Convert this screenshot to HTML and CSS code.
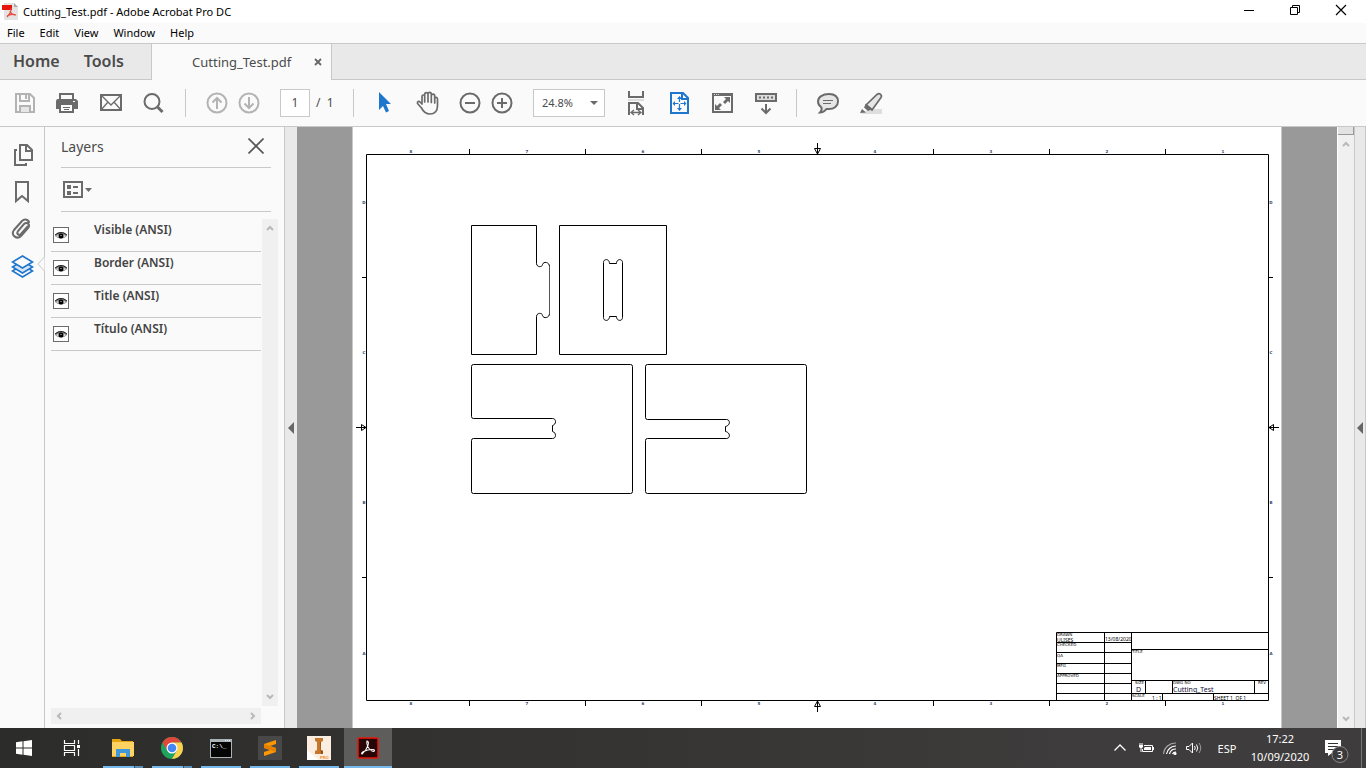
FILE: index.html
```html
<!DOCTYPE html>
<html lang="en">
<head>
<meta charset="utf-8">
<title>Cutting_Test.pdf - Adobe Acrobat Pro DC</title>
<link rel="stylesheet" href="styles.css">
</head>
<body>
<header class="titlebar">
  <svg class="app-icon" viewBox="0 0 16 17" width="16" height="17" aria-hidden="true">
    <path d="M2 0H12L16 4V17H2Z" fill="#e3e3e3"/><path d="M12 0L16 4H12Z" fill="#a9a9a9"/>
    <path d="M0 2H10V7H0Z" fill="#e5140c"/>
    <path d="M9 5C9.500 8 8 11 5 14M8 8C9 11 11 12 14 12M5 13C8 11 11 11 14 12" fill="none" stroke="#e9483e" stroke-width="1.200"/>
  </svg>
  <h1 class="window-title">Cutting_Test.pdf - Adobe Acrobat Pro DC</h1>
  <div class="window-controls">
    <button aria-label="Minimize"><svg viewBox="0 0 12 12" width="12" height="12"><path d="M1 6.500H11" stroke="#000"/></svg></button>
    <button aria-label="Restore"><svg viewBox="0 0 12 12" width="12" height="12"><path d="M1.500 3.500H8.500V10.500H1.500ZM3.500 3.500V1.500H10.500V8.500H8.500" fill="none" stroke="#000"/></svg></button>
    <button aria-label="Close"><svg viewBox="0 0 12 12" width="12" height="12"><path d="M1 1L11 11M11 1L1 11" stroke="#000" stroke-width="1.200"/></svg></button>
  </div>
</header>
<nav class="menubar" aria-label="Menu">
  <button>File</button><button>Edit</button><button>View</button><button>Window</button><button>Help</button>
</nav>
<div class="tabs">
  <div class="tabs-main"><button>Home</button><button>Tools</button></div>
  <div class="tab-doc"><span>Cutting_Test.pdf</span>
    <button aria-label="Close tab"><svg viewBox="0 0 8 8" width="8" height="8"><path d="M1 1L7 7M7 1L1 7" stroke="#666" stroke-width="1.800"/></svg></button>
  </div>
  <div class="tabs-rest"></div>
</div>
<div class="toolbar">
  <div class="tool-group">
    <button aria-label="Save"><svg viewBox="0 0 32 32" fill="none" stroke="#b3b3b3" stroke-width="2"><path d="M7 7H21L25 11V25H7Z"/><path d="M11 7V14H20V7M17 8V12M11 25V19H21V25"/><path d="M12 20H20V25H12Z" fill="#e6e6e6" stroke="none"/></svg></button>
    <button aria-label="Print"><svg viewBox="0 0 32 32"><path d="M8 12V7H21V12" fill="none" stroke="#6b6b6b" stroke-width="2"/><path d="M5 12H24L26 14V22H22V18H7V22H4V14Z" fill="#6b6b6b"/><path d="M8 18V25H21V18" fill="#fff" stroke="#6b6b6b" stroke-width="2"/><path d="M11 20.500H18M12 22.500H17" stroke="#6b6b6b"/><path d="M21 14.500H23" stroke="#fff"/></svg></button>
    <button aria-label="Email"><svg viewBox="0 0 32 32" fill="none" stroke="#6b6b6b"><path d="M6 8H26V23H6Z" stroke-width="2"/><path d="M6 8L16 18L26 8M6 23L13 15M26 23L19 15" stroke-width="1.300"/></svg></button>
    <button aria-label="Find"><svg viewBox="0 0 32 32" fill="none" stroke="#6b6b6b"><circle cx="14" cy="14.500" r="7.500" stroke-width="2"/><path d="M19.500 20L24.500 25" stroke-width="3"/></svg></button>
  </div>
  <i class="sep"></i>
  <div class="tool-group tight">
    <button aria-label="Previous page"><svg viewBox="0 0 32 32" fill="none" stroke="#b3b3b3" stroke-width="2"><circle cx="16" cy="16" r="9.500"/><path d="M16 22V11M11.500 15.500L16 11L20.500 15.500"/></svg></button>
    <button aria-label="Next page"><svg viewBox="0 0 32 32" fill="none" stroke="#b3b3b3" stroke-width="2"><circle cx="16" cy="16" r="9.500"/><path d="M16 10V21M11.500 16.500L16 21L20.500 16.500"/></svg></button>
  </div>
  <label class="page-field"><input type="text" value="1" aria-label="Page number"><span>/&nbsp; 1</span></label>
  <i class="sep"></i>
  <div class="tool-group">
    <button aria-label="Select"><svg viewBox="0 0 32 32"><path d="M10 5L22 17H17L20 24L17 25.500L14 19L10 23Z" fill="#1e76cd"/></svg></button>
    <button aria-label="Hand"><svg viewBox="0 0 32 32" fill="none" stroke="#6b6b6b" stroke-width="1.700" stroke-linecap="round" stroke-linejoin="round"><path d="M10 17V9.500C10 7.500 12.700 7.500 12.700 9.500V15M12.700 9V7.300C12.700 5 16 5 16 7.300V15M16 7.300C16 4.700 19.300 4.700 19.300 7.300V15.500M19.300 9C19.300 6.500 22.700 6.500 22.700 9V16M22.700 12C23 9.500 25.500 10 25.500 12V19C25.500 24 22.500 27 18 27C13 27 11 24 9.500 21L5.500 16.500C5 14.500 7 14 8 15L10 17"/></svg></button>
  </div>
  <div class="tool-group tight zoomers">
    <button aria-label="Zoom out"><svg viewBox="0 0 32 32" fill="none" stroke="#6b6b6b" stroke-width="2"><circle cx="16" cy="16" r="9.500"/><path d="M11 16H21"/></svg></button>
    <button aria-label="Zoom in"><svg viewBox="0 0 32 32" fill="none" stroke="#6b6b6b" stroke-width="2"><circle cx="16" cy="16" r="9.500"/><path d="M11 16H21M16 11V21"/></svg></button>
  </div>
  <div class="zoom-field"><select aria-label="Zoom level"><option>24.8%</option></select><i class="caret"></i></div>
  <div class="tool-group">
    <button aria-label="Fit width"><svg viewBox="0 0 32 32" fill="none" stroke="#6b6b6b" stroke-width="2"><path d="M9 4V10H23V4M9 28V16H18L23 21V28M17 16V22H23"/><path d="M8 13H24" stroke="#dedede"/><path d="M11 25.500H21M14 23L11 25.500L14 28M18 23L21 25.500L18 28" stroke-width="1.300"/></svg></button>
    <button aria-label="Fit page"><svg viewBox="0 0 32 32" fill="none" stroke="#1e76cd" stroke-width="2"><path d="M8 6H20L25 11V26H8ZM19 6V12H25"/><path d="M16.500 10V22M10.500 16.500H22.500" stroke-width="1.200" stroke-dasharray="5 2"/><path d="M16.500 9L19 12H14ZM16.500 24L19 21H14ZM9.500 16.500L12 14V19ZM23.500 16.500L21 14V19Z" fill="#1e76cd" stroke="none"/></svg></button>
    <button aria-label="Full screen"><svg viewBox="0 0 32 32"><path d="M7 7H26V25H7Z" fill="none" stroke="#6b6b6b" stroke-width="2"/><path d="M6 6H27V9H6Z" fill="#6b6b6b"/><path d="M8 7.500H13" stroke="#ddd" stroke-dasharray="1 1"/><path d="M24 10V16L22 14L19 17L17 15L20 12L18 10ZM9 23V17L11 19L14 16L16 18L13 21L15 23Z" fill="#6b6b6b"/></svg></button>
    <button aria-label="Read mode"><svg viewBox="0 0 32 32" fill="none" stroke="#6b6b6b" stroke-width="2"><path d="M7 7H27V14H7Z" fill="#ddd"/><path d="M10 10.500H24" stroke-dasharray="2 2"/><path d="M17 17V26M12.500 21.500L17 26L21.500 21.500"/></svg></button>
  </div>
  <i class="sep"></i>
  <div class="tool-group">
    <button aria-label="Comment"><svg viewBox="0 0 32 32"><path d="M17 7C23 7 26 10 26 14.500C26 19 22 22 17 22H14.500C12.500 24.500 10.500 25.500 8 25.500C9.500 24 10 22.500 9.500 20.500C7.500 19 6 17 6 14.500C6 10 10.500 7 17 7Z" fill="#e6e6e6" stroke="#6b6b6b" stroke-width="2"/><path d="M11 13.500H21M11 16.500H19" stroke="#6b6b6b" stroke-width="1.200"/></svg></button>
    <button aria-label="Highlight"><svg viewBox="0 0 32 32"><path d="M14 22H27V27H6Z" fill="#dedede"/><path d="M11 18L22 7.500C24.500 5.500 27.500 8 26 10.500L17 23Z" fill="#e6e6e6" stroke="#6b6b6b" stroke-width="1.700"/><path d="M11 16.500L17.500 22L13 24L9 20.500ZM7 22L11 25.500L5 26Z" fill="#6b6b6b"/></svg></button>
  </div>
</div>
<main class="workspace">
  <nav class="rail" aria-label="Navigation panes">
    <button aria-label="Page thumbnails"><svg viewBox="0 0 24 24" fill="none" stroke="#6b6b6b" stroke-width="2"><path d="M9 2H16L21 7V17H9ZM15 2V8H21M6 7H4V22H15V20"/></svg></button>
    <button aria-label="Bookmarks"><svg viewBox="0 0 24 24" fill="none" stroke="#6b6b6b" stroke-width="2"><path d="M5 2H17V21L11 16L5 21Z"/></svg></button>
    <button aria-label="Attachments"><svg viewBox="0 0 24 24" fill="none" stroke="#6b6b6b" stroke-width="2"><path d="M17 7L10 15C8 17 5 15 7 12L13 5C16 2 20 6 17 9L10 17C6 21 -1 16 3 11L11 2C14 -1 18 1 18 4" transform="translate(0 2)"/></svg></button>
    <button aria-label="Layers" aria-pressed="true"><svg viewBox="0 0 24 24" fill="none" stroke="#1e76cd" stroke-width="1.600"><path d="M5.500 14.500L1.500 17L11.500 23L21.500 17L17.500 14.500"/><path d="M5.500 10.500L1.500 13L11.500 19L21.500 13L17.500 10.500Z" fill="#d6e6f5"/><path d="M11.500 2L21.500 8L11.500 14L1.500 8Z" fill="#fafafa"/></svg></button>
    <svg class="pointer" viewBox="0 0 8 14" width="8" height="14" aria-hidden="true"><path d="M7.500 0L1 7L7.500 14" fill="#fafafa" stroke="#c8c8c8"/></svg>
  </nav>
  <section class="panel" aria-label="Layers">
    <div class="panel-head"><h2>Layers</h2><button aria-label="Close panel"><svg viewBox="0 0 16 16" width="16" height="16"><path d="M.5 .5L15.500 15.500M15.500 .5L.5 15.500" stroke="#555" stroke-width="1.600"/></svg></button></div>
    <div class="panel-tools"><button aria-label="Options"><svg viewBox="0 0 30 18" width="30" height="18"><path d="M1 1H19V16H1Z" fill="none" stroke="#6b6b6b" stroke-width="2"/><path d="M4 4H8V8H4ZM4 10H8V14H4ZM10 5H15V7H10ZM10 11H15V13H10ZM22 7H29L25.500 11Z" fill="#6b6b6b"/></svg></button></div>
    <div class="panel-body">
      <ul class="layers">
        <li><button aria-label="Toggle Visible"><svg viewBox="0 0 14 14"><use href="#eye"/></svg></button><span>Visible (ANSI)</span></li>
        <li><button aria-label="Toggle Border"><svg viewBox="0 0 14 14"><use href="#eye"/></svg></button><span>Border (ANSI)</span></li>
        <li><button aria-label="Toggle Title"><svg viewBox="0 0 14 14"><use href="#eye"/></svg></button><span>Title (ANSI)</span></li>
        <li><button aria-label="Toggle Título"><svg viewBox="0 0 14 14"><use href="#eye"/></svg></button><span>Título (ANSI)</span></li>
      </ul>
      <div class="vscroll"><svg viewBox="0 0 8 6"><path d="M1 5L4 2L7 5"/></svg><svg viewBox="0 0 8 6"><path d="M1 1L4 4L7 1"/></svg></div>
      <div class="hscroll"><svg viewBox="0 0 6 8"><path d="M5 1L2 4L5 7"/></svg><svg viewBox="0 0 6 8"><path d="M1 1L4 4L1 7"/></svg></div>
    </div>
  </section>
  <button class="splitter left" aria-label="Collapse panel"><svg viewBox="0 0 6 12" width="6" height="12"><path d="M6 0V12L0 6Z" fill="#666"/></svg></button>
  <div class="canvas">
    <svg class="sheet" viewBox="353 127 928 601" role="img" aria-label="Cutting_Test drawing">
      <defs>
        <g id="eye"><path d="M1 8Q2 4 7 4Q12 4 13 8Q7 13 1 8Z" fill="#888"/><path d="M1 7Q7 2 13 7" fill="none" stroke="#222"/><path d="M2 8Q7 5 12 8Q7 11 2 8Z" fill="#eee"/><circle cx="7" cy="8" r="2.500" fill="#000"/><circle cx="7" cy="7.500" r=".6" fill="#fff"/></g>
      </defs>
      <g class="ink">
        <path d="M366.500 154.500H1268.500V700.500H366.500Z"/>
        <path d="M469.500 149V154M585.500 149V154M701.500 149V154M933.500 149V154M1049.500 149V154M1165.500 149V154M469.500 701V706M585.500 701V706M701.500 701V706M933.500 701V706M1049.500 701V706M1165.500 701V706M362 277.500H366M362 577.500H366M1269 277.500H1273M1269 577.500H1273"/>
        <path d="M817.500 143V154M814.500 148.500H820.500L817.500 154ZM817.500 701V712M814.500 706.500H820.500L817.500 701ZM356 427.500H366M361.500 424.500V430.500L366 427.500ZM1269 427.500H1279M1273.500 424.500V430.500L1269 427.500Z"/>
        <path d="M549.500 313.500C549.500 318 543.500 319 542.500 315.500C542.500 312.500 536.500 312.500 536.500 316.500V354.500H471.500V225.500H536.500V263.500C536.500 267.500 542.500 267.500 542.500 264.500C543.500 261 549.500 262 549.500 266.500"/>
        <path d="M549.500 266V314" stroke="#555"/>
        <path d="M559.500 225.500H666.500V354.500H559.500Z"/>
        <path d="M603.500 262.500C603.500 258.500 609.500 258.500 609.500 263.500H616.500C616.500 258.500 622.500 258.500 622.500 262.500V317.500C622.500 321.500 616.500 321.500 616.500 316.500H609.500C609.500 321.500 603.500 321.500 603.500 317.500Z"/>
        <path d="M473.500 364.500H630.500Q632.500 364.500 632.500 366.500V491.500Q632.500 493.500 630.500 493.500H473.500Q471.500 493.500 471.500 491.500V440.500Q471.500 438.500 473.500 438.500H552.500C556.500 438.500 556.500 432.500 552.500 431.500V425.500C556.500 424.500 556.500 418.500 552.500 418.500H473.500Q471.500 418.500 471.500 416.500V366.500Q471.500 364.500 473.500 364.500Z"/>
        <path d="M647.500 364.500H804.500Q806.500 364.500 806.500 366.500V491.500Q806.500 493.500 804.500 493.500H647.500Q645.500 493.500 645.500 491.500V440.500Q645.500 438.500 647.500 438.500H726.500C730.500 438.500 730.500 432.500 725.500 431.500V426.500C730.500 425.500 730.500 419.500 726.500 419.500H647.500Q645.500 419.500 645.500 417.500V366.500Q645.500 364.500 647.500 364.500Z"/>
        <path d="M1056.500 700V632.500H1268M1104.500 632V700M1131.500 632V700M1056 642.500H1131M1056 652.500H1131M1056 663.500H1131M1056 673.500H1131M1056 683.500H1131M1056 693.500H1268M1131 649.500H1268M1131 680.500H1268M1145.500 680V693M1172.500 680V693M1254.500 680V693M1162.500 693V700M1213.500 693V700"/>
      </g>
      <g class="zone">
        <text x="411" y="153">8</text><text x="527" y="153">7</text><text x="643" y="153">6</text><text x="759" y="153">5</text><text x="875" y="153">4</text><text x="991" y="153">3</text><text x="1107" y="153">2</text><text x="1223" y="153">1</text>
        <text x="411" y="705">8</text><text x="527" y="705">7</text><text x="643" y="705">6</text><text x="759" y="705">5</text><text x="875" y="705">4</text><text x="991" y="705">3</text><text x="1107" y="705">2</text><text x="1223" y="705">1</text>
        <text x="364" y="204">D</text><text x="364" y="354">C</text><text x="364" y="504">B</text><text x="364" y="655">A</text>
        <text x="1271" y="204">D</text><text x="1271" y="354">C</text><text x="1271" y="504">B</text><text x="1271" y="655">A</text>
      </g>
      <g class="tiny">
        <text x="1057" y="636">DRAWN</text><text x="1057" y="646">CHECKED</text><text x="1057" y="657">QA</text><text x="1057" y="667">MFG</text><text x="1057" y="677">APPROVED</text>
        <text x="1132" y="653">TITLE</text><text x="1135" y="684">SIZE</text><text x="1173" y="684">DWG NO</text><text x="1258" y="684">REV</text><text x="1132" y="697">SCALE</text>
      </g>
      <g class="small"><text x="1057" y="642">ULISES</text><text x="1105" y="641">13/08/2020</text><text x="1152" y="700">1 : 1</text><text x="1214" y="700">SHEET 1 &#160;OF 1</text></g>
      <g class="name"><text x="1136" y="692">D</text><text x="1173" y="692">Cutting_Test</text></g>
    </svg>
  </div>
  <div class="vscroll main-scroll"><i class="thumb"></i><svg viewBox="0 0 8 6"><path d="M1 5L4 2L7 5"/></svg><svg viewBox="0 0 8 6"><path d="M1 1L4 4L7 1"/></svg></div>
  <button class="splitter right" aria-label="Expand tools"><svg viewBox="0 0 6 12" width="6" height="12"><path d="M6 0V12L0 6Z" fill="#666"/></svg></button>
</main>
<footer class="taskbar">
  <button class="sys" aria-label="Start"><svg viewBox="0 0 24 24"><path d="M4 6.300L10.500 5.300V11.500H4ZM11.500 5.200L20 4V11.500H11.500ZM4 12.500H10.500V18.700L4 17.800ZM11.500 12.500H20V20L11.500 18.800Z" fill="#fff"/></svg></button>
  <button class="sys" aria-label="Task view"><svg viewBox="0 0 24 24" fill="none" stroke="#fff"><path d="M4.500 4V7.500H14.500V4M4.500 20V16.500H14.500V20M4.500 9.500H14.500V14.500H4.500ZM18.500 4V8M18.500 13V20" stroke-width="1.200"/><path d="M17 9H20V12H17Z" fill="#fff" stroke="none"/></svg></button>
  <div class="apps">
    <button class="open multi" aria-label="File Explorer"><svg viewBox="0 0 24 24"><path d="M1 3H9L11 5H22V21H1Z" fill="#e8a512"/><path d="M1 6H23V20H1Z" fill="#fed361"/><path d="M5 13H19V21H15V17H9V21H5Z" fill="#3f97dc"/></svg></button>
    <button class="open multi" aria-label="Google Chrome"><svg viewBox="0 0 24 24"><circle cx="12" cy="12" r="11" fill="#1fa25d"/><path d="M2.500 6.500A11 11 0 0 1 21.500 6.500H12L7.200 14.700Z" fill="#e0483b"/><path d="M21.500 6.500A11 11 0 0 1 12 23L16.800 14.700L12 6.500Z" fill="#fdd04e"/><circle cx="12" cy="12" r="5.500" fill="#fff"/><circle cx="12" cy="12" r="4.300" fill="#4587f2"/></svg></button>
    <button class="open" aria-label="Command Prompt"><svg viewBox="0 0 24 24"><path d="M1 3H23V22H1Z" fill="#a9b3b8"/><path d="M2 6H22V21H2Z" fill="#050505"/><path d="M16 4.500H22" stroke="#eee" stroke-dasharray="1 1"/><text x="3" y="12" class="prompt">C:\_</text></svg></button>
    <button class="open" aria-label="Sublime Text"><svg viewBox="0 0 24 24"><rect width="24" height="24" rx="1" fill="#484848"/><path d="M6 8L18 4V8L12 10L18 12V16L6 20V16L12 14L6 12Z" fill="#ff9800"/><path d="M6 8L18 12V16L6 12Z" fill="#e57f00"/></svg></button>
    <button class="open" aria-label="Autodesk Inventor"><svg viewBox="0 0 24 24"><path d="M0 0H24V24H0Z" fill="#fbeee1"/><path d="M0 14L12 24H0Z" fill="#fff"/><path d="M8 2H16V5L14 6V14L16 15V18H8V15L10 14V6L8 5Z" fill="#c5772b"/><path d="M13 6H14V14L16 15V18H14Z" fill="#935316"/><text x="13" y="23" class="pro">PRO</text></svg></button>
    <button class="open active" aria-label="Adobe Acrobat"><svg viewBox="0 0 24 24"><rect x="2" y="2" width="20" height="20" rx="1" fill="#290606" stroke="#e8170d" stroke-width="1.500"/><path d="M11 5C14 5 12 13 6 18C4 17 10 13 17 13.500C20 14 18 16 16 15C12 13 10 8 11 5Z" fill="none" stroke="#fff" stroke-width="1.100"/></svg></button>
  </div>
  <div class="tray">
    <button aria-label="Hidden icons"><svg viewBox="0 0 16 16" fill="none" stroke="#fff" stroke-width="1.300"><path d="M2.500 10.500L8 5L13.500 10.500"/></svg></button>
    <button aria-label="Battery"><svg viewBox="0 0 16 16"><path d="M6 5.500H14.500V11.500H4.500V9M15.500 7V10M2 3V5M4 3V5M3 8V12" fill="none" stroke="#fff"/><path d="M7 7H13V10H6V8ZM1 5H5V7L4 8H2L1 7Z" fill="#fff"/></svg></button>
    <button aria-label="Network"><svg viewBox="0 0 16 16" fill="none" stroke="#fff" stroke-width="1.200"><path d="M1.500 14A12 12 0 0 1 14 3" stroke="#aaa"/><path d="M4.500 14A9.500 9.500 0 0 1 14 6M7.500 14A6.500 6.500 0 0 1 14 9M10.500 14A3.500 3.500 0 0 1 14 12"/><circle cx="13" cy="13.500" r="1" fill="#fff"/></svg></button>
    <button aria-label="Volume"><svg viewBox="0 0 16 16" fill="none" stroke="#fff"><path d="M.5 6.500H3L6.500 3V13L3 9.500H.5ZM8.500 6Q10 8 8.500 10M10.500 4.500Q13 8 10.500 11.500"/><path d="M13 3Q16.500 8 13 13" stroke="#999"/></svg></button>
    <button class="lang">ESP</button>
    <button class="clock"><time>17:22</time><time>10/09/2020</time></button>
    <button class="notes" aria-label="Notifications"><svg viewBox="0 0 26 26" width="26" height="26"><path d="M1 3H17V16H8L4 19V16H1Z" fill="#fff"/><path d="M4 6.500H14M4 9.500H14M4 12.500H10" stroke="#333"/><circle cx="16" cy="17.500" r="8" fill="#3c3a3a" stroke="#888"/><text x="16" y="22" text-anchor="middle" class="count">3</text></svg></button>
  </div>
</footer>
</body>
</html>
```
FILE: styles.css
```css
* { box-sizing: border-box; }
body {
  margin: 0;
  height: 100vh;
  display: flex;
  flex-direction: column;
  overflow: hidden;
  background: #fafafa;
  color: #000;
  font-family: "Noto Sans", "Open Sans", sans-serif;
  font-size: 11px;
}
button {
  padding: 0;
  border: 0;
  background: none;
  color: inherit;
  font: inherit;
  display: flex;
  align-items: center;
  justify-content: center;
}
h1, h2, ul { margin: 0; padding: 0; font-weight: normal; list-style: none; }

.titlebar { display: flex; align-items: center; height: 23px; padding-left: 2px; background: #fff; }
.app-icon { margin-bottom: 1px; }
.window-title { flex: 1; padding-left: 5px; font-size: 11px; }
.window-controls { display: flex; align-self: stretch; padding-bottom: 3px; }
.window-controls button { width: 46px; }
.window-controls button:last-child { margin-right: 2px; }

.menubar { display: flex; gap: 15px; height: 20px; padding: 0 0 2px 7px; }

.tabs { display: flex; height: 37px; border-top: 1px solid #c8c8c8; color: #4b4b4b; }
.tabs-main, .tabs-rest { background: #e9e9e9; border-bottom: 1px solid #c8c8c8; }
.tabs-main { display: flex; gap: 24px; width: 152px; padding: 0 0 2px 13px; border-right: 1px solid #c8c8c8; font-size: 16px; font-weight: 600; }
.tab-doc { display: flex; align-items: center; justify-content: space-between; width: 180px; padding: 0 9px 0 40px; border-right: 1px solid #c8c8c8; font-size: 13px; }
.tabs-rest { flex: 1; }

.toolbar { display: flex; align-items: center; height: 47px; padding: 0 0 1px 9px; border-bottom: 1px solid #c8c8c8; color: #4b4b4b; }
.tool-group { display: flex; gap: 11px; }
.tool-group.tight { gap: 0; }
.tool-group svg { display: block; width: 32px; height: 32px; }
.sep { width: 1px; height: 28px; margin: 0 15px; background: #c8c8c8; }
.page-field { display: flex; align-items: center; gap: 6px; margin-left: 15px; font-size: 12px; }
.page-field input { width: 30px; height: 28px; padding: 0; border: 1px solid #c8c8c8; background: #fff; color: inherit; font: inherit; text-align: center; }
.page-field span { width: 22px; white-space: nowrap; }
.zoomers { margin-left: 10px; }
.zoom-field { display: flex; align-items: center; margin: 0 15px; position: relative; }
.zoom-field select { appearance: none; width: 72px; height: 28px; padding: 0 8px; border: 1px solid #c8c8c8; border-radius: 0; background: #fff; color: inherit; font: inherit; }
.caret { position: absolute; right: 7px; border: 4px solid transparent; border-top-color: #6b6b6b; border-bottom: 0; }

.workspace { flex: 1; min-height: 0; display: flex; }
.rail { position: relative; width: 45px; padding: 16px 0 0 11px; border-right: 1px solid #c8c8c8; display: flex; flex-direction: column; gap: 13px; }
.rail button svg { display: block; width: 24px; height: 24px; }
.rail button { width: 24px; }
.pointer { position: absolute; right: -1px; top: 130px; }

.panel { width: 240px; display: flex; flex-direction: column; padding: 0 6px 4px; border-right: 1px solid #c8c8c8; color: #4b4b4b; }
.panel-head, .panel-tools { display: flex; align-items: center; margin: 0 7px 0 10px; border-bottom: 1px solid #c8c8c8; }
.panel-head { height: 41px; justify-content: space-between; padding: 0 7px 2px 0; }
.panel-head h2 { font-size: 14px; }
.panel-tools { height: 44px; padding-left: 2px; }
.panel-body { flex: 1; display: grid; grid-template: 1fr 16px / 1fr 16px; gap: 2px 1px; margin-top: 7px; }
.layers { color: #444; font-size: 12px; font-weight: 600; }
.layers li { display: flex; height: 33px; border-bottom: 1px solid #c8c8c8; line-height: 22px; }
.layers button { width: 16px; height: 16px; margin: 8px 25px 0 2px; border: 1px solid #6b6b6b; background: #fff; }
.layers svg { display: block; width: 14px; height: 14px; }
.vscroll, .hscroll { display: flex; align-items: center; justify-content: space-between; background: #f0f0f0; }
.vscroll { flex-direction: column; padding: 6px 0; }
.hscroll { padding: 0 5px; }
.vscroll svg, .hscroll svg { fill: none; stroke: #b9b9b9; stroke-width: 2; }
.vscroll svg { width: 8px; height: 6px; }
.hscroll svg { width: 6px; height: 8px; }

.splitter { width: 12px; background: #e9e9e9; }
.splitter.right { border-left: 1px solid #c8c8c8; border-right: 1px solid #c8c8c8; }
.canvas { flex: 1; min-width: 0; display: flex; justify-content: center; background: #999; }
.sheet { height: 100%; aspect-ratio: 928 / 601; background: #fff; outline: 1px solid #c8c8c8; }
.ink { fill: none; stroke: #000; stroke-width: 1; }
.zone, .tiny { font-family: "DejaVu Sans", sans-serif; }
.zone { fill: #2c4a70; font-size: 4px; font-weight: bold; text-anchor: middle; }
.tiny { font-size: 4px; }
.small { font-family: "Noto Sans", sans-serif; font-size: 5px; }
.name { fill: #101038; font-family: "Noto Sans", sans-serif; font-size: 7px; }
.main-scroll { position: relative; width: 17px; padding-top: 14px; border-left: 1px solid #fff; }
.thumb { position: absolute; top: 0; left: 0; right: 0; height: 8px; border-right: 1px solid #999; border-bottom: 1px solid #999; background: #e3e3e3; }

.taskbar { display: flex; height: 40px; background: linear-gradient(90deg, #2c2c2a, #343331 40%, #3e3c3c 80%); color: #fff; }
.taskbar svg { display: block; }
.sys { width: 48px; }
.sys svg, .apps svg { width: 24px; height: 24px; }
.apps { display: flex; gap: 1px; margin-left: 3px; }
.apps button { width: 48px; }
.open { background: linear-gradient(#76b9ed, #76b9ed) center bottom / 40px 2px no-repeat; }
.open.multi { background-image: linear-gradient(90deg, #76b9ed 31px, #3e4a54 31px, #3e4a54 32px, #5c8fb8 32px); }
.open.active { background-size: 48px 2px; background-color: #5d5d5b; }
.prompt { fill: #fff; font: bold 6px "Liberation Mono", monospace; }
.pro { fill: #f08a24; font: bold 4px "Liberation Sans", sans-serif; }
.tray { display: flex; align-items: center; gap: 8px; margin-left: auto; margin-right: 4px; padding-right: 11px; border-right: 1px solid #777; }
.tray button svg { width: 16px; height: 16px; }
.tray button:first-child { margin-right: 2px; }
.lang { width: 26px; margin-left: 4px; }
.clock { flex-direction: column; width: 64px; line-height: 18px; }
.tray .notes svg { width: 26px; height: 26px; }
.notes { padding-top: 4px; margin-left: 4px; }
.count { fill: #fff; font: 11px "Noto Sans", sans-serif; }
```
